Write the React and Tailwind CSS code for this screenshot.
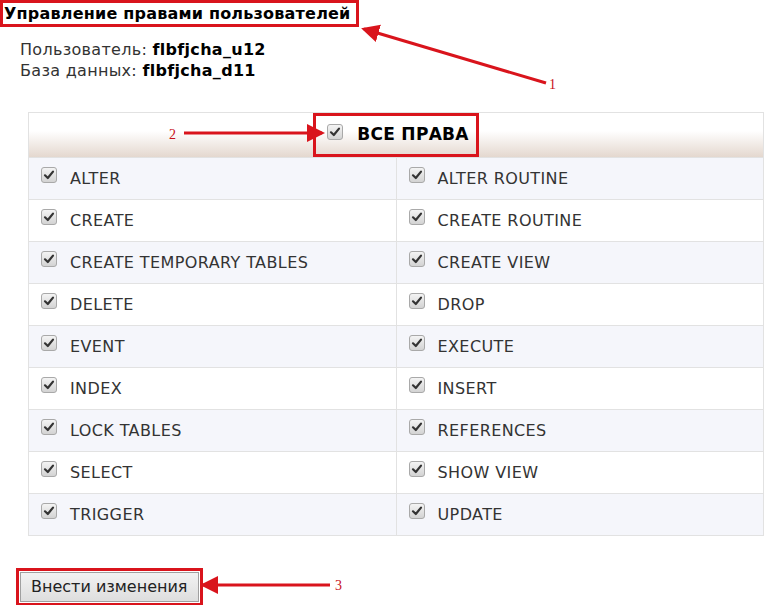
import React from 'react';

const rows = [
  ['ALTER', 'ALTER ROUTINE'],
  ['CREATE', 'CREATE ROUTINE'],
  ['CREATE TEMPORARY TABLES', 'CREATE VIEW'],
  ['DELETE', 'DROP'],
  ['EVENT', 'EXECUTE'],
  ['INDEX', 'INSERT'],
  ['LOCK TABLES', 'REFERENCES'],
  ['SELECT', 'SHOW VIEW'],
  ['TRIGGER', 'UPDATE'],
];

function Check() {
  return (
    <span className="inline-flex h-[16px] w-[16px] shrink-0 items-center justify-center rounded-[3px] border border-[#a9a9a9] bg-gradient-to-b from-[#f4f4f4] to-[#d3d3d3]">
      <svg width="12" height="12" viewBox="0 0 12 12">
        <path d="M2 6.3 L4.8 9 L10 2.6" fill="none" stroke="#333" strokeWidth="2.2" strokeLinecap="round" strokeLinejoin="round" />
      </svg>
    </span>
  );
}

function Cell({ label, left }) {
  return (
    <td className={`h-[42px] px-[12px] align-middle ${left ? 'border-r border-[#e2e2e2]' : ''}`}>
      <div className="flex items-center gap-[13px]">
        <span className="-mt-[6px]"><Check /></span>
        <span className="text-[16px] tracking-[0.4px] text-[#333]">{label}</span>
      </div>
    </td>
  );
}

export default function App() {
  return (
    <div className="relative h-[605px] w-[768px] overflow-hidden bg-white font-['DejaVu_Sans',Verdana,sans-serif] text-[#222]">
      <div className="inline-block border-[3px] border-[#d9141c] pl-[1px] pr-[5px] leading-[21px]">
        <h1 className="text-[16px] font-bold tracking-[0.2px] text-black">Управление правами пользователей</h1>
      </div>

      <div className="ml-[20px] mt-[12px] text-[16px] leading-[21px] tracking-[0.3px] text-[#333]">
        <div>Пользователь: <b className="text-black">flbfjcha_u12</b></div>
        <div>База данных: <b className="text-black">flbfjcha_d11</b></div>
      </div>

      <table className="ml-[28px] mt-[31px] w-[736px] table-fixed border-collapse border border-[#e2e2e2]">
        <thead>
          <tr className="bg-gradient-to-b from-[#ffffff] from-40% to-[#e3d6cd]">
            <th colSpan={2} className="h-[42px] p-0">
              <div className="flex justify-center">
                <div className="flex h-[44px] items-center gap-[14px] border-[3px] border-[#d9141c] pl-[11px] pr-[7px]">
                  <span className="-mt-[4px]"><Check /></span>
                  <span className="text-[17px] font-bold tracking-[0.3px] text-black">ВСЕ ПРАВА</span>
                </div>
              </div>
            </th>
          </tr>
        </thead>
        <tbody>
          {rows.map(([a, b], i) => (
            <tr key={a} className={`border-t border-[#e2e2e2] ${i % 2 === 0 ? 'bg-[#f5f6fb]' : 'bg-white'}`}>
              <Cell label={a} left />
              <Cell label={b} />
            </tr>
          ))}
        </tbody>
      </table>

      <div className="ml-[16px] mt-[32px] inline-block border-[3px] border-[#d9141c] p-[1px] align-top">
        <button className="block h-[30px] border border-[#a0a0a0] bg-gradient-to-b from-[#f2f2f2] to-[#dedede] px-[10px] text-[16px] text-[#222]">
          Внести изменения
        </button>
      </div>

      <svg className="pointer-events-none absolute left-0 top-0" width="768" height="605">
        <defs>
          <marker id="ah" markerWidth="6" markerHeight="6" refX="5" refY="3" orient="auto">
            <path d="M0 0 L6 3 L0 6 Z" fill="#d9141c" />
          </marker>
        </defs>
        <line x1="546" y1="83" x2="364" y2="29" stroke="#d9141c" strokeWidth="3" markerEnd="url(#ah)" />
        <line x1="184" y1="133" x2="322" y2="133" stroke="#d9141c" strokeWidth="3" markerEnd="url(#ah)" />
        <line x1="330" y1="585" x2="203" y2="585" stroke="#d9141c" strokeWidth="3" markerEnd="url(#ah)" />
        <text x="549" y="89" fill="#c8101a" fontSize="14" fontFamily="Liberation Serif, serif">1</text>
        <text x="169" y="139" fill="#c8101a" fontSize="14" fontFamily="Liberation Serif, serif">2</text>
        <text x="335" y="590" fill="#c8101a" fontSize="14" fontFamily="Liberation Serif, serif">3</text>
      </svg>
    </div>
  );
}
